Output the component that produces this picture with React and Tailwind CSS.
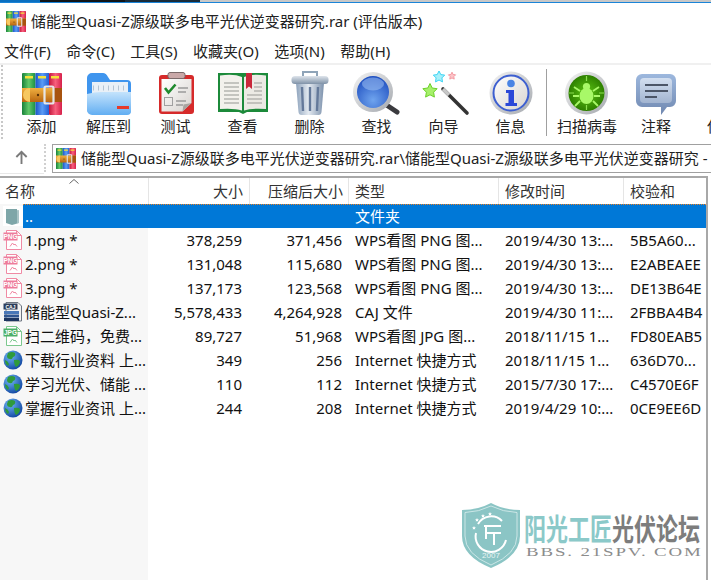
import React from 'react';

const rows = [
  { icon: 'up', name: '..', size: '', packed: '', type: '文件夹', time: '', sum: '', selected: true },
  { icon: 'png', name: '1.png *', size: '378,259', packed: '371,456', type: 'WPS看图 PNG 图...', time: '2019/4/30 13:...', sum: '5B5A60...' },
  { icon: 'png', name: '2.png *', size: '131,048', packed: '115,680', type: 'WPS看图 PNG 图...', time: '2019/4/30 13:...', sum: 'E2ABEAEE' },
  { icon: 'png', name: '3.png *', size: '137,173', packed: '123,568', type: 'WPS看图 PNG 图...', time: '2019/4/30 13:...', sum: 'DE13B64E' },
  { icon: 'caj', name: '储能型Quasi-Z...', size: '5,578,433', packed: '4,264,928', type: 'CAJ 文件', time: '2019/4/30 11:...', sum: '2FBBA4B4' },
  { icon: 'jpg', name: '扫二维码，免费...', size: '89,727', packed: '51,968', type: 'WPS看图 JPG 图...', time: '2018/11/15 1...', sum: 'FD80EAB5' },
  { icon: 'web', name: '下载行业资料 上...', size: '349', packed: '256', type: 'Internet 快捷方式', time: '2018/11/15 1...', sum: '636D70...' },
  { icon: 'web', name: '学习光伏、储能 ...', size: '110', packed: '112', type: 'Internet 快捷方式', time: '2015/7/30 17:...', sum: 'C4570E6F' },
  { icon: 'web', name: '掌握行业资讯 上...', size: '244', packed: '208', type: 'Internet 快捷方式', time: '2019/4/29 10:...', sum: '0CE9EE6D' },
];

const Gradients = () => (
  <svg className="absolute w-0 h-0">
    <defs>
      <linearGradient id="bookGreen"><stop offset="0" stopColor="#17803a" /><stop offset="0.5" stopColor="#62c96a" /><stop offset="1" stopColor="#1c8f42" /></linearGradient>
      <linearGradient id="bookBlue"><stop offset="0" stopColor="#1b55c8" /><stop offset="0.5" stopColor="#5b9cf5" /><stop offset="1" stopColor="#2360d4" /></linearGradient>
      <linearGradient id="bookRed"><stop offset="0" stopColor="#c4173c" /><stop offset="0.5" stopColor="#f7607e" /><stop offset="1" stopColor="#d6204a" /></linearGradient>
      <linearGradient id="belt" x2="0" y2="1"><stop offset="0" stopColor="#f0b040" /><stop offset="1" stopColor="#b9660f" /></linearGradient>
      <linearGradient id="folderFront" x2="0" y2="1"><stop offset="0" stopColor="#c4e3fc" /><stop offset="1" stopColor="#62aef2" /></linearGradient>
      <linearGradient id="paper" x2="1" y2="1"><stop offset="0" stopColor="#ffffff" /><stop offset="1" stopColor="#d8d4d0" /></linearGradient>
      <linearGradient id="trashBody"><stop offset="0" stopColor="#8ea3bc" /><stop offset="0.45" stopColor="#e4eaf1" /><stop offset="1" stopColor="#7d92ad" /></linearGradient>
      <linearGradient id="trashLid" x2="0" y2="1"><stop offset="0" stopColor="#dfe5ec" /><stop offset="1" stopColor="#7f92a8" /></linearGradient>
      <linearGradient id="silver" x2="1" y2="1"><stop offset="0" stopColor="#f4f4f4" /><stop offset="1" stopColor="#a4a8ae" /></linearGradient>
      <radialGradient id="lens" cy="0.75" r="0.75"><stop offset="0" stopColor="#6fa4ee" /><stop offset="1" stopColor="#1f4fc0" /></radialGradient>
      <radialGradient id="bugBg"><stop offset="0" stopColor="#5cc414" /><stop offset="1" stopColor="#2e8000" /></radialGradient>
      <linearGradient id="bubble" x2="0" y2="1"><stop offset="0" stopColor="#9db8de" /><stop offset="1" stopColor="#7088b0" /></linearGradient>
      <linearGradient id="bubbleIn" x2="0" y2="1"><stop offset="0" stopColor="#d3dff0" /><stop offset="1" stopColor="#a2b4d0" /></linearGradient>
      <radialGradient id="globe" cx="0.35" cy="0.3" r="0.8"><stop offset="0" stopColor="#6fb6f5" /><stop offset="1" stopColor="#0b3f9c" /></radialGradient>
    </defs>
  </svg>
);

const RarArt = () => (
  <g>
    <rect x="0" y="0" width="13.5" height="42" rx="1" fill="url(#bookGreen)" />
    <rect x="13.5" y="0" width="13.5" height="42" fill="url(#bookBlue)" />
    <rect x="27" y="0" width="13" height="42" rx="1" fill="url(#bookRed)" />
    <rect x="3" y="3" width="8" height="2.5" fill="#f5e23a" />
    <rect x="16" y="3" width="8" height="2.5" fill="#f5e23a" />
    <rect x="29" y="3" width="8" height="2.5" fill="#f5e23a" />
    <rect x="0" y="15" width="40" height="14" fill="url(#belt)" />
    <path d="M8 15 a7 7 0 0 0 0 14 z" fill="#f7c860" />
    <rect x="31" y="15" width="9" height="14" fill="#a8530f" />
    <rect x="22.5" y="13.5" width="9" height="17" rx="1.5" fill="none" stroke="#e6e6e6" strokeWidth="2.2" />
    <circle cx="16" cy="22" r="1.2" fill="#5a3208" />
  </g>
);

const RarIcon = ({ className }) => (
  <svg viewBox="0 0 40 42" className={className}><RarArt /></svg>
);

const FolderArt = () => (
  <g>
    <path d="M3 8 a5 5 0 0 1 5-5 h11 q3 0 5 4 l2 3 h17 a4 4 0 0 1 4 4 v26 a4 4 0 0 1-4 4 H8 a5 5 0 0 1-5-5 z" fill="#3f95ee" />
    <rect x="8" y="12" width="36" height="12" fill="#e9f0f7" />
    <line x1="9" y1="18" x2="43" y2="18" stroke="#b4c4d4" strokeWidth="5" strokeDasharray="1 4" />
    <path d="M3 24 q8-2 14-2 h30 v19 a4 4 0 0 1-4 4 H8 a5 5 0 0 1-5-5 z" fill="url(#folderFront)" />
    <rect x="33" y="36" width="12" height="3" fill="#e63a2a" />
  </g>
);

const TestArt = () => (
  <g>
    <rect x="8" y="5" width="35" height="39" rx="3" fill="#d62a2a" />
    <path d="M10.5 9 h30 v24 l-9 8.5 H10.5 z" fill="url(#paper)" />
    <path d="M31.5 41.5 l1-7 l8-1.5 z" fill="#a8a4a0" />
    <rect x="17" y="2.5" width="17" height="6" rx="2" fill="#c9a8a8" stroke="#7a6a6a" />
    <path d="M14 18 l3.5 4.5 l7-8" fill="none" stroke="#1f8a2e" strokeWidth="2.6" />
    <path d="M27 18 h10 M27 22 h8 M25 31 h10 M25 35 h7" stroke="#9a9a9a" strokeWidth="1.3" />
    <rect x="13.5" y="27.5" width="8" height="8" fill="none" stroke="#a0a0a0" />
  </g>
);

const ViewArt = () => (
  <g>
    <path d="M0 3 h50 v39 H29 l-4 2 l-4-2 H0 z" fill="#1c8a3a" />
    <path d="M2 5.5 q14-2 22 1.5 v33.5 q-8-2.5-22-1.5 z" fill="#f3f1ec" />
    <path d="M48 5.5 q-14-2-22 1.5 v33.5 q8-2.5 22-1.5 z" fill="#eceae4" />
    <path d="M6 13 h15 M6 17 h15 M6 21 h15 M6 25 h15 M6 29 h15 M6 33 h15 M29 25 h15 M29 29 h15 M29 33 h15 M36 13 h8 M36 17 h8 M36 21 h8" stroke="#b5b5b0" strokeWidth="1.4" />
    <path d="M28 3 h6 v16 l-3-2.5 l-3 2.5 z" fill="#c8283a" />
  </g>
);

const TrashArt = () => (
  <g>
    <path d="M18 6 v-4 h14 v4" fill="none" stroke="#8fa4b8" strokeWidth="2" />
    <path d="M11 13 h28 l-2.5 29 q-0.3 3-3 3 H16.5 q-2.7 0-3-3 z" fill="url(#trashBody)" />
    <path d="M17 17 l1 24 M25 17 v24 M33 17 l-1 24" stroke="#64799a" strokeWidth="2.4" />
    <rect x="6.5" y="6" width="37" height="8" rx="3.5" fill="url(#trashLid)" />
  </g>
);

const SearchArt = () => (
  <g>
    <line x1="33" y1="34" x2="45" y2="42" stroke="#3a3a3e" strokeWidth="5" strokeLinecap="round" />
    <circle cx="21" cy="22" r="20" fill="url(#silver)" />
    <circle cx="21" cy="22" r="16" fill="url(#lens)" />
    <ellipse cx="21" cy="14" rx="11" ry="6.5" fill="#9cc0f2" opacity="0.55" />
  </g>
);

const star = (cx, cy, r) => {
  const pts = [];
  for (let i = 0; i < 10; i++) {
    const rad = i % 2 === 0 ? r : r * 0.5;
    const a = -Math.PI / 2 + (i * Math.PI) / 5;
    pts.push(`${(cx + rad * Math.cos(a)).toFixed(1)},${(cy + rad * Math.sin(a)).toFixed(1)}`);
  }
  return pts.join(' ');
};

const WizardArt = () => (
  <g>
    <polygon points={star(11, 21, 7.5)} fill="#a6f06a" stroke="#6cd02a" />
    <polygon points={star(20, 7, 6)} fill="#a8f0fa" stroke="#3cd4f4" />
    <polygon points={star(33, 6, 3.8)} fill="#fcc4c8" stroke="#f49aa2" />
    <line x1="24" y1="19" x2="48" y2="43" stroke="#333" strokeWidth="3.6" strokeLinecap="round" />
    <line x1="24" y1="19" x2="30" y2="25" stroke="#c8c8c8" strokeWidth="3.6" />
  </g>
);

const InfoArt = () => (
  <g>
    <circle cx="25" cy="23" r="21.5" fill="url(#silver)" />
    <circle cx="25" cy="23" r="17.5" fill="url(#paper)" stroke="#3d5fd0" strokeWidth="2" />
    <circle cx="25" cy="13.5" r="3.8" fill="#4a84e4" />
    <path d="M20 20 h8 v13 h3 v3 H19.5 v-3 h3 v-10 h-2.5 z" fill="#2b48d8" />
  </g>
);

const BugArt = () => (
  <g>
    <circle cx="24.5" cy="23" r="21.5" fill="url(#silver)" />
    <circle cx="24.5" cy="23" r="18" fill="url(#bugBg)" />
    <path d="M24.5 6 v5 M24.5 35 v5 M7 23 h5 M37 23 h5" stroke="#8ce050" strokeWidth="1.2" />
    <ellipse cx="24.5" cy="26" rx="7" ry="8" fill="#a8f868" />
    <circle cx="24.5" cy="16.5" r="3.6" fill="#a8f868" />
    <path d="M18 21 l-6-4 M31 21 l6-4 M17 26 h-6 M32 26 h6 M18 31 l-5 5 M31 31 l5 5" stroke="#a8f868" strokeWidth="1.8" fill="none" />
  </g>
);

const CommentArt = () => (
  <g>
    <path d="M11 4 h28 a6 6 0 0 1 6 6 v21 a6 6 0 0 1-6 6 h-3 l-6 8 v-8 H11 a6 6 0 0 1-6-6 V10 a6 6 0 0 1 6-6 z" fill="url(#bubble)" />
    <rect x="9" y="8" width="32" height="25" rx="4" fill="url(#bubbleIn)" />
    <path d="M14 15 h23 M14 21 h23 M14 27 h12" stroke="#4c5668" strokeWidth="1.8" />
  </g>
);

const ShieldArt = () => (
  <g>
    <path d="M18 8 q12 0 20-5 q8 5 20 5 v20 q0 12-20 18 q-20-6-20-18 z" fill="#8fb6ea" />
    <path d="M21 11 q10 0 17-4 v36 q-17-5-17-15 z" fill="#dfeafa" />
  </g>
);

const tools = [
  { label: '添加', w: 'w-[67px]', art: <g transform="translate(5 3)"><RarArt /></g> },
  { label: '解压到', w: 'w-[67px]', art: <FolderArt /> },
  { label: '测试', w: 'w-[67px]', art: <TestArt /> },
  { label: '查看', w: 'w-[67px]', art: <ViewArt /> },
  { label: '删除', w: 'w-[67px]', art: <TrashArt /> },
  { label: '查找', w: 'w-[67px]', art: <SearchArt /> },
  { label: '向导', w: 'w-[67px]', art: <WizardArt /> },
  { label: '信息', w: 'w-[67px]', art: <InfoArt /> },
];

const Tool = ({ label, w, art }) => (
  <div className={`${w} shrink-0 flex flex-col items-center`}>
    <svg viewBox="0 0 50 46" className="w-[50px] h-[46px] mt-[5px] shrink-0 overflow-visible">{art}</svg>
    <span className="leading-[20px] text-[15px] whitespace-nowrap">{label}</span>
  </div>
);

const PageIcon = ({ color, fill, label }) => (
  <svg viewBox="0 0 20 20" className="w-5 h-5 shrink-0">
    <path d="M3.5 0.5 h10 l5 5 v14 h-15 z" fill="#fff" stroke={color} />
    <path d="M13.5 0.5 v5 h5" fill="none" stroke={color} />
    <rect x="0.5" y="2.5" width="14" height="8" fill={fill} />
    <text x="7.5" y="9" textAnchor="middle" fontSize="6.5" fontWeight="700" fill="#fff" fontFamily="'Liberation Sans', sans-serif">{label}</text>
    <path d="M7 16.5 l2.5-3.5 l1.5 2 l1-1 l2 2.5" fill="none" stroke={color} />
  </svg>
);

const CajIcon = () => (
  <svg viewBox="0 0 20 20" className="w-5 h-5 shrink-0">
    <path d="M3 0.5 h12 l3.5 3.5 v15 H3 z" fill="#f2f2f2" stroke="#6c7480" />
    <rect x="0.5" y="1.5" width="14" height="6" fill="#2c3e5c" />
    <text x="7.5" y="6.5" textAnchor="middle" fontSize="5" fontWeight="700" fill="#fff" fontFamily="'Liberation Sans', sans-serif">CAJ</text>
    <path d="M1 9 h15 v3 H1 z" fill="#4a78b8" />
    <path d="M1 12.5 h15 v3 H1 z" fill="#2f5590" />
    <path d="M1 16 h15 v3 H1 z" fill="#1d3560" />
  </svg>
);

const GlobeIcon = () => (
  <svg viewBox="0 0 20 20" className="w-5 h-5 shrink-0">
    <circle cx="10" cy="10" r="9.5" fill="url(#globe)" />
    <path d="M5 3 q4-2 7 0 q1 3-2 4 q-1 3-3 2 q-3 0-3-3 z M11 10 q4-1 6 1 q0 4-4 6 q-2-2-2-7 z M2 10 q3 1 4 4 l-1 2 q-3-2-3-6 z" fill="#2f9a3c" />
  </svg>
);

const UpFolderIcon = () => (
  <div className="w-5 h-5 shrink-0 bg-white flex items-center justify-center">
    <svg viewBox="0 0 20 20" className="w-5 h-5">
      <path d="M3 3 h11 v1.5 h2 V17 l-7 2 l-6-2 z" fill="#7ea6a8" />
      <path d="M14 4.5 h2 V17 h-2 z" fill="#a8c4c6" />
    </svg>
  </div>
);

const RowIcon = ({ icon }) => {
  if (icon === 'up') return <UpFolderIcon />;
  if (icon === 'png') return <PageIcon color="#f08aa4" fill="#ee7d9c" label="PNG" />;
  if (icon === 'jpg') return <PageIcon color="#7cc88e" fill="#4caf68" label="JPG" />;
  if (icon === 'caj') return <CajIcon />;
  return <GlobeIcon />;
};

const Row = ({ row }) => (
  <div className="h-6 flex items-center whitespace-nowrap">
    <div className="w-[23px] pl-[3px] shrink-0"><RowIcon icon={row.icon} /></div>
    <div className={`flex-1 h-6 flex items-center min-w-0 ${row.selected ? 'bg-[#0078d7] text-white border-t border-dotted border-[#f08020]' : ''}`}>
      <div className="w-[125px] pl-[2px] shrink-0">{row.name}</div>
      <div className="w-[101px] pr-[7px] text-right shrink-0">{row.size}</div>
      <div className="w-[100px] pr-[7px] text-right shrink-0">{row.packed}</div>
      <div className="w-[150px] pl-[6px] shrink-0">{row.type}</div>
      <div className="w-[125px] pl-[6px] shrink-0">{row.time}</div>
      <div className="pl-[6px] shrink-0">{row.sum}</div>
    </div>
  </div>
);

const HeaderCell = ({ className, children }) => (
  <div className={`h-full flex items-center border-r border-[#e5e5e5] shrink-0 ${className}`}>{children}</div>
);

const App = () => {
  return (
    <div className="relative w-[711px] h-[580px] overflow-hidden bg-white flex flex-col text-[15px] text-[#111] font-['Noto_Sans','Noto_Sans_CJK_SC',sans-serif]">
      <Gradients />

      {/* top edge of the window behind */}
      <div className="h-[2px] flex shrink-0">
        <div className="w-[40px] bg-[#0a6fc0]" />
        <div className="w-[85px] bg-[#101418]" />
        <div className="w-[75px] bg-[#1a2c3a]" />
        <div className="flex-1 bg-[#c8c8c8]" />
      </div>
      <div className="h-[1px] bg-[#1a84d8] shrink-0" />

      {/* Title */}
      <div className="h-[38px] pb-[2px] flex items-center pl-[6px] shrink-0">
        <RarIcon className="w-5 h-[21px] shrink-0" />
        <span className="ml-[5px] whitespace-nowrap text-[#222]">储能型Quasi-Z源级联多电平光伏逆变器研究.rar (评估版本)</span>
      </div>

      {/* Menu */}
      <div className="h-[22px] pb-[2px] flex items-center pl-[4px] gap-[15.5px] shrink-0 whitespace-nowrap text-[#222]">
        <span>文件(F)</span>
        <span>命令(C)</span>
        <span>工具(S)</span>
        <span>收藏夹(O)</span>
        <span>选项(N)</span>
        <span>帮助(H)</span>
      </div>
      <div className="h-[2px] bg-[#f0f0f0] shrink-0" />

      {/* Toolbar */}
      <div className="h-[77px] flex shrink-0 text-[#222]">
        <div className="w-[8px] shrink-0 pl-[1px]">
          <div className="w-[2px] h-[74px] border-l-2 border-dotted border-[#c8c8c8]" />
        </div>
        {tools.map((t) => <Tool key={t.label} {...t} />)}
        <div className="w-[4px] shrink-0 pl-[2px] pt-[4px]">
          <div className="w-[1px] h-[67px] bg-[#a0a0a0]" />
        </div>
        <Tool label="扫描病毒" w="w-[78px]" art={<BugArt />} />
        <Tool label="注释" w="w-[60px]" art={<CommentArt />} />
        <Tool label="保护" w="w-[72px]" art={<ShieldArt />} />
      </div>

      {/* Address bar */}
      <div className="h-[34px] flex shrink-0">
        <div className="w-[52px] shrink-0 flex">
          <div className="w-[44px] h-[32px] pr-[2px] border-b border-[#e8e8e8] flex items-center justify-center">
            <svg viewBox="0 0 16 16" className="w-[15px] h-[15px]" fill="none" stroke="#7a7a7a" strokeWidth="2">
              <path d="M8 15 V2 M2.5 7.5 L8 2 l5.5 5.5" />
            </svg>
          </div>
          <div className="w-[2px] h-[28px] mt-[2px] border-l-2 border-dotted border-[#d0d0d0]" />
        </div>
        <div className="flex-1 h-[29px] mt-[2px] border border-[#a0a0a0] border-r-0 flex items-center pl-[3px] min-w-0">
          <RarIcon className="w-5 h-[21px] shrink-0" />
          <span className="ml-[5px] whitespace-nowrap text-[#222]">储能型Quasi-Z源级联多电平光伏逆变器研究.rar\储能型Quasi-Z源级联多电平光伏逆变器研究 -</span>
        </div>
      </div>

      {/* File list */}
      <div className="flex-1 min-h-0 mr-[3px] border-t-2 border-r-2 border-[#a8a8a8] flex flex-col">
        <div className="h-[26px] flex items-center shrink-0 relative text-[#333] whitespace-nowrap">
          <HeaderCell className="w-[149px] pl-[5px]">名称</HeaderCell>
          <svg viewBox="0 0 10 5" className="absolute left-[69px] top-[1px] w-[10px] h-[5px]" fill="none" stroke="#666">
            <path d="M0.5 4.5 L5 0.5 L9.5 4.5" />
          </svg>
          <HeaderCell className="w-[101px] justify-end pr-[6px]">大小</HeaderCell>
          <HeaderCell className="w-[99px] justify-end pr-[5px]">压缩后大小</HeaderCell>
          <HeaderCell className="w-[150px] pl-[6px]">类型</HeaderCell>
          <HeaderCell className="w-[125px] pl-[6px]">修改时间</HeaderCell>
          <div className="pl-[6px]">校验和</div>
        </div>
        <div className="flex-1 bg-[linear-gradient(to_right,#f7f7f7_148px,#ffffff_148px)]">
          {rows.map((row, i) => <Row key={i} row={row} />)}
        </div>
      </div>

      {/* Forum watermark */}
      <div className="absolute left-[462px] top-[503px] w-[240px] h-[66px] flex gap-[4px] opacity-90">
        <svg viewBox="0 0 58 65" className="w-[58px] h-[65px] shrink-0">
          <path d="M29 0 q13 7 29 7 v26 q0 20-29 32 q-29-12-29-32 V7 q16 0 29-7 z" fill="#7fbfbf" />
          <path d="M29 3 q12 6 26 6.500 v23.500 q0 18-26 29 q-26-11-26-29 V9.500 q14-.500 26-6.500 z" fill="none" stroke="#d8eeee" strokeWidth="0.8" />
          <path d="M40 18 a15 15 0 0 0-24 3 M14 30 a15 15 0 0 0 30 7" fill="none" stroke="#fff" strokeWidth="2" />
          <polygon points={star(15, 17, 2)} fill="#fff" />
          <polygon points={star(21, 13, 2)} fill="#fff" />
          <polygon points={star(28, 11, 2)} fill="#fff" />
          <polygon points={star(12, 25, 2)} fill="#fff" />
          <path d="M22 23 h17 M24 23 v13 M24 30 h15 M32 30 v12" fill="none" stroke="#fff" strokeWidth="2" />
          <text x="29" y="55" textAnchor="middle" fontSize="8" fill="#e8f4f4" fontFamily="'Liberation Sans', sans-serif">2007</text>
        </svg>
        <div className="flex flex-col min-w-0">
          <div className="mt-[9px] h-[31px] flex items-center whitespace-nowrap text-[22px] leading-[22px] font-bold [transform:scaleY(1.35)]">
            <span className="text-[#7fc4c4]">阳光工匠</span>
            <span className="text-[#6f6f6f]">光伏论坛</span>
          </div>
          <div className="mt-[4px] ml-[2px] whitespace-nowrap text-[13px] leading-[10px] tracking-[1.3px] text-[#808080] origin-left font-['Liberation_Serif',serif] [transform:scaleX(1.45)]">BBS. 21SPV. COM</div>
        </div>
      </div>
    </div>
  );
};

export default App;
